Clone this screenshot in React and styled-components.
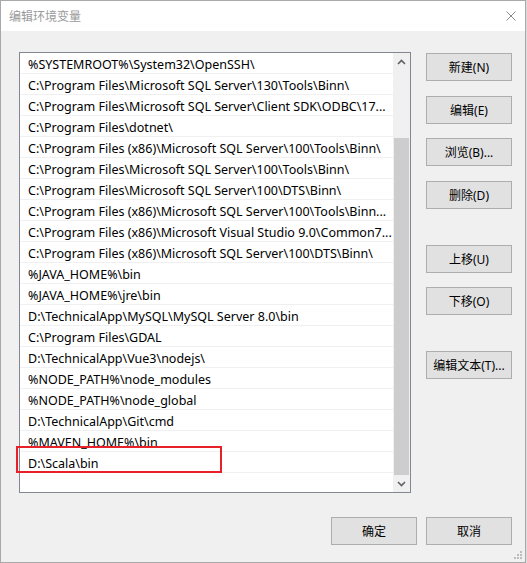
import React from 'react';
import styled, { createGlobalStyle } from 'styled-components';

const GlobalStyle = createGlobalStyle`
    html, body {
        margin: 0;
        padding: 0;
        background: #dcdcdc;
    }
    * {
        box-sizing: border-box;
    }
`

const font = `"Segoe UI", "Microsoft YaHei UI", "Noto Sans", "Noto Sans CJK SC", sans-serif`;

const Window = styled.div`
    position: relative;
    width: 526px;
    height: 563px;
    border: 1px solid #a9a9a9;
    background: #f0f0f0;
    display: flex;
    flex-direction: column;
    font-family: ${font};
    font-size: 12px;
    color: #000;
`

const TitleBar = styled.div`
    height: 30px;
    background: #fff;
    display: flex;
    align-items: center;
    justify-content: space-between;
    padding: 0 9px 0 8px;
    color: #9a9a9a;
`

const CloseIcon = styled.svg`
    width: 10px;
    height: 10px;
`

const Content = styled.div`
    flex: 1;
    display: flex;
    flex-direction: column;
    padding: 21px 13px 0 18px;
`

const Main = styled.div`
    display: flex;
    gap: 15px;
`

const ListBox = styled.div`
    position: relative;
    width: 392px;
    height: 441px;
    border: 1px solid #828790;
    background: #fff;
    display: flex;
`

const Rows = styled.div`
    flex: 1;
    overflow: hidden;
`

const Row = styled.div`
    height: 21px;
    line-height: 18px;
    padding: 3px 0 0 8px;
    border-bottom: 1px solid #f0f0f0;
    font-size: 12.5px;
    white-space: nowrap;
    overflow: hidden;
`

const ScrollBar = styled.div`
    width: 17px;
    background: #f0f0f0;
    display: flex;
    flex-direction: column;
`

const ArrowBox = styled.div`
    height: 17px;
    display: flex;
    align-items: center;
    justify-content: center;
`

const Track = styled.div`
    flex: 1;
    display: flex;
    flex-direction: column;
    padding-top: 68px;
`

const Thumb = styled.div`
    flex: 1;
    margin: 0 1px;
    background: #cdcdcd;
`

const Highlight = styled.div`
    position: absolute;
    left: -4px;
    top: 393px;
    width: 206px;
    height: 27px;
    border: 2px solid #e8202a;
`

const ButtonColumn = styled.div`
    display: flex;
    flex-direction: column;
`

const Button = styled.button`
    width: 86px;
    height: 28px;
    margin-top: ${p => p.$gap || 0}px;
    background: #e1e1e1;
    border: 1px solid #adadad;
    font-family: ${font};
    font-size: 12px;
    color: #000;
    padding: 0;
    display: flex;
    align-items: center;
    justify-content: center;
`

const Footer = styled.div`
    display: flex;
    justify-content: flex-end;
    gap: 9px;
    margin-top: 24px;
`

const Grip = styled.svg`
    position: absolute;
    right: 3px;
    bottom: 3px;
    width: 8px;
    height: 8px;
`

const paths = [
    '%SYSTEMROOT%\\System32\\OpenSSH\\',
    'C:\\Program Files\\Microsoft SQL Server\\130\\Tools\\Binn\\',
    'C:\\Program Files\\Microsoft SQL Server\\Client SDK\\ODBC\\17...',
    'C:\\Program Files\\dotnet\\',
    'C:\\Program Files (x86)\\Microsoft SQL Server\\100\\Tools\\Binn\\',
    'C:\\Program Files\\Microsoft SQL Server\\100\\Tools\\Binn\\',
    'C:\\Program Files\\Microsoft SQL Server\\100\\DTS\\Binn\\',
    'C:\\Program Files (x86)\\Microsoft SQL Server\\100\\Tools\\Binn...',
    'C:\\Program Files (x86)\\Microsoft Visual Studio 9.0\\Common7...',
    'C:\\Program Files (x86)\\Microsoft SQL Server\\100\\DTS\\Binn\\',
    '%JAVA_HOME%\\bin',
    '%JAVA_HOME%\\jre\\bin',
    'D:\\TechnicalApp\\MySQL\\MySQL Server 8.0\\bin',
    'C:\\Program Files\\GDAL',
    'D:\\TechnicalApp\\Vue3\\nodejs\\',
    '%NODE_PATH%\\node_modules',
    '%NODE_PATH%\\node_global',
    'D:\\TechnicalApp\\Git\\cmd',
    '%MAVEN_HOME%\\bin',
    'D:\\Scala\\bin',
];

const sideButtons = [
    { label: '新建(N)', gap: 1 },
    { label: '编辑(E)', gap: 15 },
    { label: '浏览(B)...', gap: 14 },
    { label: '删除(D)', gap: 15 },
    { label: '上移(U)', gap: 36 },
    { label: '下移(O)', gap: 14 },
    { label: '编辑文本(T)...', gap: 36 },
];

function Chevron({ up }) {
    return (
        <svg width="9" height="6" viewBox="0 0 9 6">
            <path
                d={up ? 'M1 5 L4.5 1.5 L8 5' : 'M1 1 L4.5 4.5 L8 1'}
                fill="none"
                stroke="#606060"
                strokeWidth="1.6"
            />
        </svg>
    );
}

export default function App() {
    return (
        <>
            <GlobalStyle />
            <Window>
                <TitleBar>
                    <span>编辑环境变量</span>
                    <CloseIcon viewBox="0 0 10 10">
                        <path d="M0.5 0.5 L9.5 9.5 M9.5 0.5 L0.5 9.5" stroke="#8a8a8a" strokeWidth="1" />
                    </CloseIcon>
                </TitleBar>
                <Content>
                    <Main>
                        <ListBox>
                            <Rows>
                                {paths.map((p, i) => (
                                    <Row key={i}>{p}</Row>
                                ))}
                            </Rows>
                            <ScrollBar>
                                <ArrowBox><Chevron up /></ArrowBox>
                                <Track><Thumb /></Track>
                                <ArrowBox><Chevron /></ArrowBox>
                            </ScrollBar>
                            <Highlight />
                        </ListBox>
                        <ButtonColumn>
                            {sideButtons.map(b => (
                                <Button key={b.label} $gap={b.gap}>{b.label}</Button>
                            ))}
                        </ButtonColumn>
                    </Main>
                    <Footer>
                        <Button>确定</Button>
                        <Button>取消</Button>
                    </Footer>
                </Content>
                <Grip viewBox="0 0 8 8">
                    <rect x="6" y="0" width="2" height="2" fill="#bcbcbc" />
                    <rect x="3" y="3" width="2" height="2" fill="#bcbcbc" />
                    <rect x="6" y="3" width="2" height="2" fill="#bcbcbc" />
                    <rect x="0" y="6" width="2" height="2" fill="#bcbcbc" />
                    <rect x="3" y="6" width="2" height="2" fill="#bcbcbc" />
                    <rect x="6" y="6" width="2" height="2" fill="#bcbcbc" />
                </Grip>
            </Window>
        </>
    );
}
